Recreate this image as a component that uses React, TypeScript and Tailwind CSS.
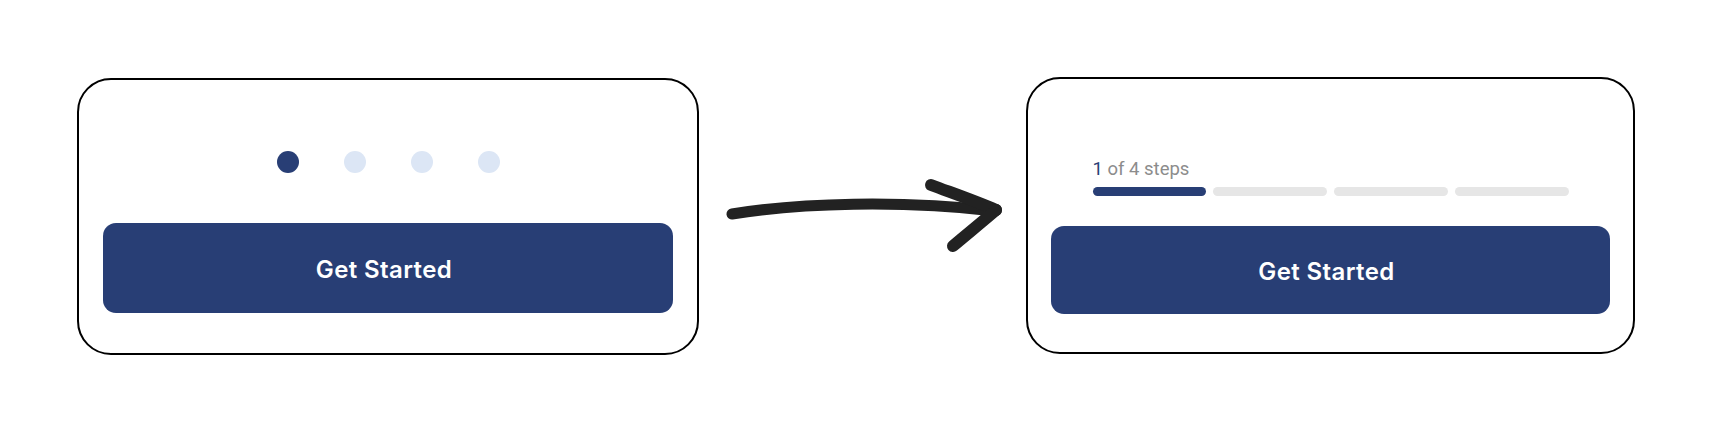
import React from "react";

const NAVY = "bg-[#283e75]";
const BUTTON_FONT = { fontFamily: "Inter, 'Liberation Sans', sans-serif" };

function DotsCard() {
  const dots = [true, false, false, false];
  return (
    <div className="mt-px flex h-[277px] w-[622px] shrink-0 flex-col rounded-[34px] border-2 border-black bg-white px-6 pb-10 pt-[71px]">
      <div className="mb-[50px] flex h-[22px] items-center justify-center gap-[45px]">
        {dots.map((active, i) => (
          <span
            key={i}
            className={`h-[22px] w-[22px] rounded-full ${active ? "bg-[#283e75]" : "bg-[#dce6f5]"}`}
          />
        ))}
      </div>
      <button
        className={`flex h-[90px] w-full items-center justify-center rounded-[13px] ${NAVY} pr-2 pt-[4px] text-[24px] font-semibold tracking-[0.4px] text-white`}
        style={BUTTON_FONT}
      >
        Get Started
      </button>
    </div>
  );
}

function StepsCard() {
  const steps = [true, false, false, false];
  return (
    <div
      className="flex h-[277px] w-[609px] shrink-0 flex-col rounded-[34px] border-2 border-black bg-white px-[23px] pb-[38px] pt-[80px]"
      style={{ fontFamily: "Roboto, 'Liberation Sans', sans-serif" }}
    >
      <div className="mx-auto mb-[30px] w-[476px]">
        <div className="mb-2 h-5 text-[18.5px] leading-5 text-[#8c8c8c]">
          <span className="text-[#283e75]">1</span> of 4 steps
        </div>
        <div className="grid grid-cols-4 gap-[7px]">
          {steps.map((done, i) => (
            <span
              key={i}
              className={`h-[9px] rounded-full ${done ? "bg-[#283e75]" : "bg-[#e6e6e6]"}`}
            />
          ))}
        </div>
      </div>
      <button
        className={`flex h-[88px] w-full items-center justify-center rounded-[13px] ${NAVY} pr-2 pt-[3px] text-[24px] font-semibold tracking-[0.4px] text-white`}
        style={BUTTON_FONT}
      >
        Get Started
      </button>
    </div>
  );
}

function HandArrow() {
  return (
    <div className="h-[277px] w-[327px] shrink-0">
      <svg width="327" height="277" viewBox="699 77 327 277" fill="none">
        <g stroke="#222222" strokeLinecap="round" strokeLinejoin="round">
          <path strokeWidth="11" d="M732 214 C800 203, 900 200, 995 211" />
          <path strokeWidth="12" d="M931 185 C955 194, 978 202, 996 210" />
          <path strokeWidth="12" d="M996 210 C982 222, 966 235, 953 246" />
        </g>
      </svg>
    </div>
  );
}

export default function App() {
  return (
    <div className="h-[434px] w-[1724px] bg-white">
      <div className="flex items-start pl-[77px] pt-[77px]">
        <DotsCard />
        <HandArrow />
        <StepsCard />
      </div>
    </div>
  );
}
